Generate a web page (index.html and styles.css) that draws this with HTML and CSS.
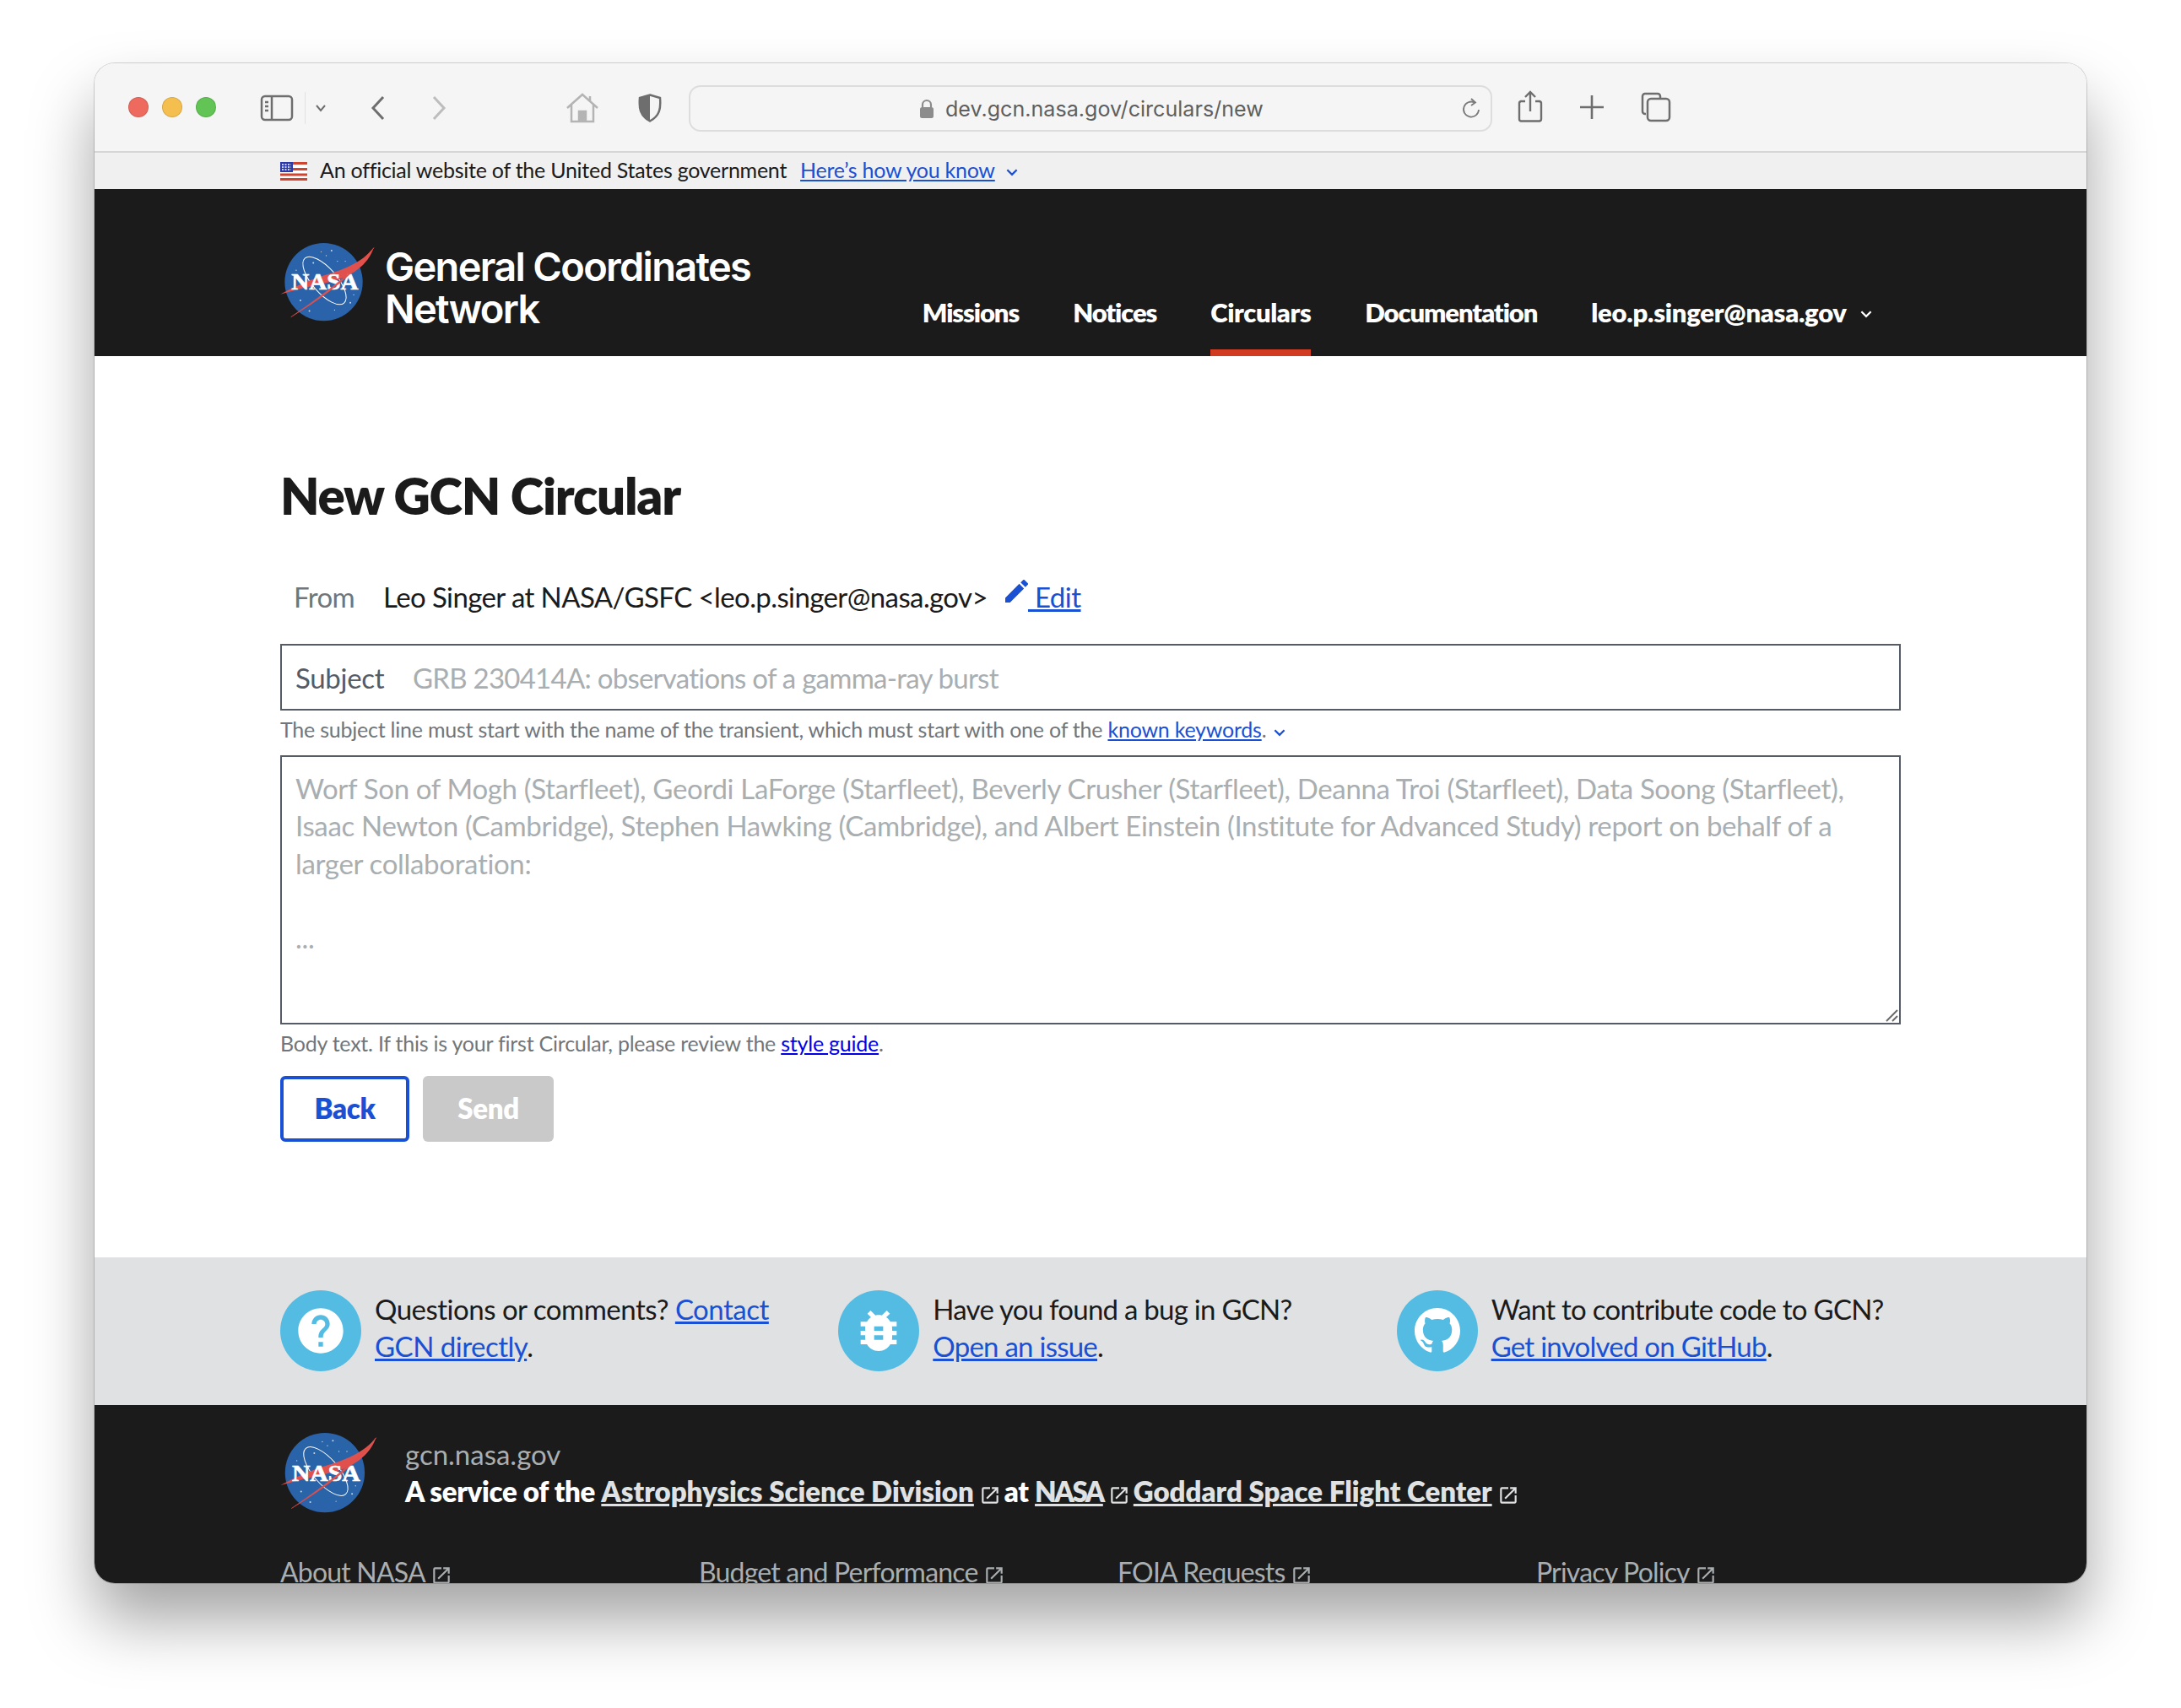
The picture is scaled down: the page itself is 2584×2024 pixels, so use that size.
FILE: index.html
```html
<!DOCTYPE html>
<html lang="en">
<head>
  <meta charset="UTF-8">
  <meta name="viewport" content="width=device-width, initial-scale=1.0">
  <title>New GCN Circular</title>
  <link rel="stylesheet" href="styles.css">
</head>
<body>
  <!-- Shared symbols -->
  <svg class="defs" width="0" height="0">
    <symbol id="launch" viewBox="0 0 24 24">
      <path d="M19 19H5V5h7V3H5a2 2 0 0 0-2 2v14a2 2 0 0 0 2 2h14c1.1 0 2-.9 2-2v-7h-2v7zM14 3v2h3.59l-9.83 9.83 1.41 1.41L19 6.41V10h2V3h-7z"/>
    </symbol>
    <symbol id="chevron" viewBox="0 0 16 16">
      <path d="M3 5.5l5 5 5-5" fill="none" stroke="currentColor" stroke-width="2"/>
    </symbol>
    <symbol id="nasa-back" viewBox="68 53 340 280">
      <circle cx="223" cy="192" r="139" fill="#2a63a9"/>
      <g fill="#fff" opacity="0.75">
        <circle cx="251" cy="80" r="3"/><circle cx="214" cy="84" r="2"/><circle cx="232" cy="98" r="2"/>
        <circle cx="186" cy="124" r="3"/><circle cx="272" cy="118" r="2"/><circle cx="140" cy="258" r="3"/>
        <circle cx="172" cy="295" r="3"/><circle cx="318" cy="266" r="3"/><circle cx="330" cy="238" r="2"/>
        <circle cx="262" cy="292" r="2"/><circle cx="300" cy="118" r="2"/><circle cx="125" cy="150" r="2"/>
      </g>
      <ellipse cx="226" cy="187" rx="106" ry="44" transform="rotate(49 226 187)" fill="none" stroke="#fff" stroke-width="3"/>
      <path d="M402 68C372 112 304 146 232 166C172 184 112 212 68 236C122 220 182 206 240 193C322 176 382 130 402 68Z" fill="#e0504c"/>
    </symbol>
    <symbol id="nasa-vector" viewBox="68 53 340 280">
      <path d="M106 317C190 258 310 176 402 70C320 180 196 262 106 317Z" fill="#e0504c" stroke="#e0504c" stroke-width="1.5"/>
    </symbol>
  </svg>

  <div class="window">
    <!-- Safari toolbar -->
    <div class="toolbar">
      <span class="light red"></span>
      <span class="light yellow"></span>
      <span class="light green"></span>
      <svg class="tool sidebar-icon" width="40" height="32" viewBox="0 0 40 32" fill="none" stroke="#6e6e6e" stroke-width="2.5">
        <rect x="2" y="2" width="36" height="28" rx="4"/>
        <path d="M14 2v28M6 9h4M6 14h4M6 19h4"/>
      </svg>
      <span class="tool-sep"></span>
      <svg class="tool side-chevron" width="14" height="10" viewBox="0 0 14 10" fill="none" stroke="#6e6e6e" stroke-width="2"><path d="M2 2l5 6 5-6"/></svg>
      <svg class="tool back-icon" width="18" height="30" viewBox="0 0 18 30" fill="none" stroke="#6e6e6e" stroke-width="3"><path d="M15 2L3 15l12 13"/></svg>
      <svg class="tool forward-icon" width="18" height="30" viewBox="0 0 18 30" fill="none" stroke="#bdbdbd" stroke-width="3"><path d="M3 2l12 13L3 28"/></svg>
      <svg class="tool home-icon" width="40" height="36" viewBox="0 0 40 36" fill="none" stroke="#b4b4b4" stroke-width="2.5">
        <path d="M2 18L20 2l18 16M7 14v20h26V14M29 4v6"/>
        <path d="M16 34V22h8v12" fill="#b4b4b4"/>
      </svg>
      <svg class="tool shield-icon" width="28" height="34" viewBox="0 0 28 34">
        <path d="M14 1.5L26 5c1 12 0 21-12 27.5C2 26 1 17 2 5z" fill="none" stroke="#6e6e6e" stroke-width="2.5"/>
        <path d="M14 1.5L2 5c-1 12 0 21 12 27.5z" fill="#6e6e6e"/>
      </svg>
      <div class="urlbar">
        <svg width="18" height="24" viewBox="0 0 18 24" class="lock"><path d="M4 10V7a5 5 0 0 1 10 0v3" fill="none" stroke="#8c8c8c" stroke-width="2.2"/><rect x="1" y="10" width="16" height="13" rx="2.5" fill="#8c8c8c"/></svg>
        <span class="url">dev.gcn.nasa.gov/circulars/new</span>
        <svg class="reload" width="22" height="28" viewBox="0 0 22 28" fill="none" stroke="#7a7a7a" stroke-width="1.8">
          <path d="M15 6.5A9 9 0 1 0 20 15"/><path d="M11 2l5 4.5-5 3.5"/>
        </svg>
      </div>
      <svg class="tool share-icon" width="30" height="38" viewBox="0 0 30 38" fill="none" stroke="#6e6e6e" stroke-width="2.4">
        <path d="M9 13H4a2.5 2.5 0 0 0-2 2.5V34a2.5 2.5 0 0 0 2 2.5h22a2.5 2.5 0 0 0 2-2.5V15.5a2.5 2.5 0 0 0-2-2.5h-5"/>
        <path d="M15 25V2M9 8l6-6 6 6"/>
      </svg>
      <svg class="tool plus-icon" width="30" height="28" viewBox="0 0 30 28" fill="none" stroke="#6e6e6e" stroke-width="2.6"><path d="M15 0v28M1 14h28"/></svg>
      <svg class="tool tabs-icon" width="36" height="36" viewBox="0 0 36 36" fill="none" stroke="#6e6e6e" stroke-width="2.5">
        <path d="M6 26H5a3 3 0 0 1-3-3V5a3 3 0 0 1 3-3h15a3 3 0 0 1 3 3v2"/>
        <rect x="8" y="8" width="26" height="26" rx="4"/>
      </svg>
    </div>

    <!-- Government banner -->
    <div class="gov-banner">
      <svg class="flag" width="32" height="22" viewBox="0 0 32 22">
        <rect width="32" height="22" fill="#fff"/>
        <path d="M0 1.5h32M0 8.5h32M0 15h32M0 20.5h32" stroke="#d0452f" stroke-width="3"/>
        <rect width="15" height="12" fill="#2b3aa8"/>
        <path d="M2 3h11M2 6h11M2 9h11" stroke="#fff" stroke-width="1.3" stroke-dasharray="2 1.5"/>
      </svg>
      <span class="gov-text">An official website of the United States government</span>
      <a href="#" class="gov-link">Here’s how you know</a>
      <svg class="gov-chevron"><use href="#chevron"/></svg>
    </div>

    <!-- Site header -->
    <header class="site-header">
      <div class="brand">
        <svg class="brand-logo" viewBox="68 53 340 280">
          <use href="#nasa-back" x="68" y="53" width="340" height="280"/>
          <text x="108" y="220" class="nasa-word" textLength="238" lengthAdjust="spacingAndGlyphs">NASA</text>
          <use href="#nasa-vector" x="68" y="53" width="340" height="280"/>
        </svg>
        <div class="brand-name">General Coordinates<br>Network</div>
      </div>
      <nav class="nav">
        <a href="#">Missions</a>
        <a href="#">Notices</a>
        <a href="#" class="current">Circulars</a>
        <a href="#">Documentation</a>
        <a href="#" class="nav-user">leo.p.singer@nasa.gov <svg class="nav-chevron"><use href="#chevron"/></svg></a>
      </nav>
    </header>

    <!-- Form -->
    <main class="main">
      <h1>New GCN Circular</h1>
      <div class="from-row">
        <span class="from-label">From</span>
        <span class="from-name">Leo Singer at NASA/GSFC &lt;leo.p.singer@nasa.gov&gt;</span>
        <a href="#" class="edit-link">
          <svg class="pencil" viewBox="3 3 18 18"><path d="M3 17.25V21h3.75L17.81 9.94l-3.75-3.75L3 17.25zM20.71 7.04a1 1 0 0 0 0-1.41l-2.34-2.34a1 1 0 0 0-1.41 0l-1.83 1.83 3.75 3.75 1.83-1.83z"/></svg>
          <span class="edit-text">&nbsp;Edit</span>
        </a>
      </div>
      <div class="subject-box">
        <label class="subject-label" for="subject">Subject</label>
        <input id="subject" class="subject-input" placeholder="GRB 230414A: observations of a gamma-ray burst">
      </div>
      <p class="hint hint-subject">The subject line must start with the name of the transient, which must start with one of the <a href="#">known keywords</a>. <svg class="hint-chevron"><use href="#chevron"/></svg></p>
      <div class="body-wrap">
        <textarea class="body-input" wrap="off" placeholder="Worf Son of Mogh (Starfleet), Geordi LaForge (Starfleet), Beverly Crusher (Starfleet), Deanna Troi (Starfleet), Data Soong (Starfleet),&#10;Isaac Newton (Cambridge), Stephen Hawking (Cambridge), and Albert Einstein (Institute for Advanced Study) report on behalf of a&#10;larger collaboration:&#10;&#10;..."></textarea>
        <svg class="grip" width="15" height="15" viewBox="0 0 15 15" fill="none" stroke="#6b6b6b" stroke-width="2"><path d="M1 14L14 1M8 14l6-6"/></svg>
      </div>
      <p class="hint hint-body">Body text. If this is your first Circular, please review the <a href="#" class="plain-link">style guide</a>.</p>
      <div class="buttons">
        <button class="btn btn-back">Back</button>
        <button class="btn btn-send" disabled>Send</button>
      </div>
    </main>

    <!-- Help band -->
    <section class="help-band">
      <div class="help-item">
        <span class="help-circle">
          <svg width="64" height="64" viewBox="0 0 24 24" fill="#fff"><path d="M12 2C6.48 2 2 6.48 2 12s4.48 10 10 10 10-4.48 10-10S17.52 2 12 2zm1 17h-2v-2h2v2zm2.07-7.75l-.9.92C13.45 12.9 13 13.5 13 15h-2v-.5c0-1.1.45-2.1 1.17-2.83l1.24-1.26c.37-.36.59-.86.59-1.41 0-1.1-.9-2-2-2s-2 .9-2 2H8c0-2.21 1.79-4 4-4s4 1.79 4 4c0 .88-.36 1.68-.93 2.25z"/></svg>
        </span>
        <p>Questions or comments? <a href="#">Contact<br>GCN directly</a>.</p>
      </div>
      <div class="help-item">
        <span class="help-circle">
          <svg width="64" height="64" viewBox="0 0 24 24" fill="#fff"><path d="M20 8h-2.81c-.45-.78-1.07-1.45-1.82-1.96L17 4.41 15.59 3l-2.17 2.17C12.96 5.06 12.49 5 12 5c-.49 0-.96.06-1.41.17L8.41 3 7 4.41l1.62 1.63C7.88 6.55 7.26 7.22 6.81 8H4v2h2.09c-.05.33-.09.66-.09 1v1H4v2h2v1c0 .34.04.67.09 1H4v2h2.81c1.04 1.79 2.97 3 5.19 3s4.15-1.21 5.19-3H20v-2h-2.09c.05-.33.09-.66.09-1v-1h2v-2h-2v-1c0-.34-.04-.67-.09-1H20V8zm-6 8h-4v-2h4v2zm0-4h-4v-2h4v2z"/></svg>
        </span>
        <p>Have you found a bug in GCN?<br><a href="#">Open an issue</a>.</p>
      </div>
      <div class="help-item">
        <span class="help-circle">
          <svg width="54" height="54" viewBox="0 0 16 16" fill="#fff"><path d="M8 0C3.58 0 0 3.58 0 8c0 3.54 2.29 6.53 5.47 7.59.4.07.55-.17.55-.38 0-.19-.01-.82-.01-1.49-2.01.37-2.53-.49-2.69-.94-.09-.23-.48-.94-.82-1.13-.28-.15-.68-.52-.01-.53.63-.01 1.08.58 1.23.82.72 1.21 1.87.87 2.33.66.07-.52.28-.87.51-1.07-1.78-.2-3.64-.89-3.64-3.95 0-.87.31-1.59.82-2.15-.08-.2-.36-1.02.08-2.12 0 0 .67-.21 2.2.82.64-.18 1.32-.27 2-.27.68 0 1.36.09 2 .27 1.53-1.04 2.2-.82 2.2-.82.44 1.1.16 1.92.08 2.12.51.56.82 1.27.82 2.15 0 3.07-1.87 3.75-3.65 3.95.29.25.54.73.54 1.48 0 1.07-.01 1.93-.01 2.2 0 .21.15.46.55.38A8.013 8.013 0 0 0 16 8c0-4.42-3.58-8-8-8z"/></svg>
        </span>
        <p>Want to contribute code to GCN?<br><a href="#">Get involved on GitHub</a>.</p>
      </div>
    </section>

    <!-- Footer -->
    <footer class="site-footer">
      <div class="footer-top">
        <svg class="footer-logo" viewBox="68 53 340 280">
          <use href="#nasa-back" x="68" y="53" width="340" height="280"/>
          <text x="108" y="220" class="nasa-word" textLength="238" lengthAdjust="spacingAndGlyphs">NASA</text>
          <use href="#nasa-vector" x="68" y="53" width="340" height="280"/>
        </svg>
        <div class="footer-id">
          <div class="footer-domain">gcn.nasa.gov</div>
          <div class="footer-service">A service of the <a href="#">Astrophysics Science Division</a><svg class="ext"><use href="#launch"/></svg>at <a href="#" class="nasa-link">NASA</a><svg class="ext"><use href="#launch"/></svg><a href="#">Goddard Space Flight Center</a><svg class="ext"><use href="#launch"/></svg></div>
        </div>
      </div>
      <div class="footer-links">
        <div><a href="#">About NASA</a><svg class="ext"><use href="#launch"/></svg></div>
        <div><a href="#">Budget and Performance</a><svg class="ext"><use href="#launch"/></svg></div>
        <div><a href="#">FOIA Requests</a><svg class="ext"><use href="#launch"/></svg></div>
        <div><a href="#">Privacy Policy</a><svg class="ext"><use href="#launch"/></svg></div>
      </div>
    </footer>
  </div>
</body>
</html>
```

FILE: styles.css
```css
/* General */
html, body {
  margin: 0;
  padding: 0;
  background: #fff;
}

body {
  width: 2584px;
  height: 2024px;
  overflow: hidden;
  padding: 75px 112px 0;
  box-sizing: border-box;
  font-family: "Lato", "Noto Sans", sans-serif;
  font-size: 33px;
  color: #1b1b1b;
}

a {
  color: #1a50d4;
}

p {
  margin: 0;
}

.defs {
  position: absolute;
}

.window {
  display: flex;
  flex-direction: column;
  width: 2360px;
  height: 1801px;
  overflow: hidden;
  border-radius: 24px;
  background: #fff;
  box-shadow: 0 0 0 1px rgba(0, 0, 0, 0.16), 0 44px 76px rgba(0, 0, 0, 0.36);
}

/* Toolbar */
.toolbar {
  display: flex;
  align-items: center;
  flex: none;
  height: 104px;
  padding-left: 40px;
  background: #f5f5f5;
  border-bottom: 2px solid #d6d6d6;
}

.light {
  flex: none;
  width: 24px;
  height: 24px;
  margin-right: 16px;
  border-radius: 50%;
  box-sizing: border-box;
  border: 1px solid rgba(0, 0, 0, 0.12);
}
.red { background: #ee6a5f; }
.yellow { background: #f5bf4f; }
.green { background: #61c454; }

.tool {
  flex: none;
}

.sidebar-icon { margin-left: 36px; margin-top: 2px; }
.tool-sep {
  width: 1px;
  height: 38px;
  margin-left: 13px;
  margin-top: 2px;
  background: #e2e2e2;
}
.side-chevron { margin-left: 11px; margin-top: 2px; }
.back-icon { margin-left: 52px; margin-top: 2px; }
.forward-icon { margin-left: 54px; margin-top: 2px; }
.home-icon { margin-left: 141px; margin-top: 1px; }
.shield-icon { margin-left: 46px; margin-top: 1px; }

.urlbar {
  display: flex;
  align-items: center;
  flex: none;
  width: 952px;
  height: 55px;
  margin-left: 32px;
  margin-top: 3px;
  box-sizing: border-box;
  border: 2px solid #dddddd;
  border-radius: 14px;
  padding-left: 271px;
  font-family: "Inter", sans-serif;
  font-size: 25.1px;
  color: #5f5f5f;
}

.lock { margin-right: 13px; }
.url { white-space: nowrap; }
.reload { margin-left: auto; margin-right: 12px; }

.share-icon { margin-left: 30px; margin-top: -3px; }
.plus-icon { margin-left: 43px; margin-top: -1px; }
.tabs-icon { margin-left: 43px; }

/* Gov banner */
.gov-banner {
  display: flex;
  align-items: center;
  flex: none;
  height: 43px;
  padding: 0 0 2px 220px;
  box-sizing: border-box;
  background: #f0f0f0;
  font-size: 25px;
  line-height: 41px;
  letter-spacing: -0.25px;
}

.flag { margin-right: 15px; margin-top: 2px; }
.gov-link { margin-left: 16px; }
.gov-chevron {
  width: 18px;
  height: 18px;
  margin-left: 11px;
  margin-top: 4px;
  color: #1a50d4;
}

/* Site header */
.site-header {
  display: flex;
  justify-content: space-between;
  align-items: flex-end;
  flex: none;
  height: 198px;
  padding: 0 252px 0 220px;
  background: #1b1b1b;
  color: #fff;
}

.brand {
  display: flex;
  align-items: flex-start;
  align-self: flex-start;
  padding-top: 64px;
}

.brand-logo {
  width: 113px;
  height: 93px;
  margin-right: 11px;
}

.brand-name {
  margin-top: 3px;
  font-family: "Inter", sans-serif;
  font-size: 47px;
  font-weight: 600;
  line-height: 50px;
  letter-spacing: -1.7px;
}

.nasa-word {
  font-family: "Liberation Serif", serif;
  font-weight: 700;
  font-size: 80px;
  fill: #fff;
  stroke: #fff;
  stroke-width: 2px;
}

.nav {
  display: flex;
  gap: 64px;
}

.nav a {
  display: flex;
  align-items: center;
  height: 76px;
  padding-bottom: 6px;
  border-bottom: 8px solid transparent;
  color: #fff;
  font-size: 31px;
  font-weight: 800;
  letter-spacing: -1.1px;
  text-decoration: none;
  white-space: pre;
}

.nav a.current {
  border-bottom-color: #d13b22;
  letter-spacing: -0.4px;
}

.nav a.nav-user {
  letter-spacing: -0.25px;
}

.nav-chevron {
  width: 18px;
  height: 18px;
  margin-left: 8px;
  margin-top: 4px;
  color: #fff;
}

/* Form */
.main {
  flex: none;
  padding: 0 220px 137px;
}

h1 {
  margin: 0;
  padding-top: 131px;
  font-size: 60px;
  font-weight: 800;
  line-height: 68px;
  letter-spacing: -1.2px;
}

.from-row {
  display: flex;
  align-items: center;
  height: 44px;
  margin-top: 64px;
  padding-left: 16px;
}

.from-label {
  width: 106px;
  color: #71767a;
  letter-spacing: -0.6px;
}

.from-name {
  letter-spacing: -0.6px;
}

.edit-link {
  display: flex;
  align-items: center;
  margin-left: 21px;
  text-decoration: none;
}

.pencil {
  width: 27px;
  height: 27px;
  margin-top: -13px;
  fill: #1a50d4;
}

.edit-text {
  letter-spacing: -0.5px;
  text-decoration: underline;
}

.subject-box {
  display: flex;
  align-items: center;
  height: 79px;
  margin-top: 34px;
  box-sizing: border-box;
  border: 2px solid #565c65;
  padding-left: 16px;
}

.subject-label {
  width: 139px;
  flex: none;
  color: #565c65;
  letter-spacing: -0.3px;
}

.subject-input {
  flex: 1;
  border: 0;
  outline: 0;
  padding: 0;
  background: transparent;
  font: inherit;
  letter-spacing: -0.75px;
}

.subject-input::placeholder,
.body-input::placeholder {
  color: #a9aeb1;
  opacity: 1;
}

.hint {
  color: #71767a;
  font-size: 25px;
  line-height: 44px;
  letter-spacing: -0.23px;
}

.hint-subject {
  height: 53px;
}

.hint-chevron {
  width: 18px;
  height: 18px;
  margin-bottom: -3px;
  color: #1a50d4;
}

.plain-link {
  color: #0000e6;
}

.body-wrap {
  position: relative;
}

.body-input {
  display: block;
  width: 100%;
  height: 319px;
  box-sizing: border-box;
  border: 2px solid #565c65;
  border-radius: 0;
  outline: 0;
  padding: 15px 16px;
  margin: 0;
  overflow: hidden;
  resize: none;
  font: inherit;
  line-height: 44.3px;
  letter-spacing: -0.33px;
}

.grip {
  position: absolute;
  right: 3px;
  bottom: 3px;
}

.buttons {
  display: flex;
  gap: 16px;
  margin-top: 17px;
}

.btn {
  height: 78px;
  box-sizing: border-box;
  border-radius: 6px;
  padding: 0 0 2px;
  font-family: inherit;
  font-size: 33px;
  font-weight: 800;
  letter-spacing: -0.3px;
}

.btn-back {
  width: 153px;
  background: #fff;
  border: 4px solid #1a50d4;
  color: #1a50d4;
}

.btn-send {
  width: 155px;
  background: #c9c9c9;
  border: 0;
  color: #fff;
}

/* Help band */
.help-band {
  display: grid;
  grid-template-columns: repeat(3, 1fr);
  gap: 64px;
  flex: none;
  padding: 39px 220px 40px;
  background: #dfe1e2;
}

.help-item {
  display: flex;
  gap: 16px;
  line-height: 44px;
  letter-spacing: -0.75px;
  white-space: nowrap;
}

.help-item:first-child {
  letter-spacing: -0.5px;
}

.help-circle {
  display: flex;
  align-items: center;
  justify-content: center;
  flex: none;
  width: 96px;
  height: 96px;
  border-radius: 50%;
  background: #54bce3;
}

/* Footer */
.site-footer {
  flex: 1;
  padding: 33px 220px 0;
  background: #1b1b1b;
  color: #fff;
}

.footer-top {
  display: flex;
  height: 95px;
}

.footer-logo {
  width: 116px;
  height: 95px;
  margin-right: 32px;
}

.footer-domain {
  color: #a9aeb1;
  line-height: 44px;
  margin-top: 3px;
}

.footer-service {
  font-weight: 800;
  line-height: 44px;
  letter-spacing: -0.3px;
  white-space: nowrap;
}

.footer-service a {
  color: #dfe1e2;
  letter-spacing: 0;
}

.footer-service .nasa-link {
  letter-spacing: -2.4px;
}

.ext {
  width: 26px;
  height: 26px;
  margin: 0 4px -5px 6px;
  fill: #dfe1e2;
}

.footer-links {
  display: grid;
  grid-template-columns: repeat(4, 1fr);
  gap: 64px;
  margin-top: 48px;
  font-size: 32px;
  line-height: 44px;
  color: #a9aeb1;
  letter-spacing: -0.8px;
}

.footer-links a {
  color: #a9aeb1;
}

.footer-links .ext {
  fill: #a9aeb1;
}
```
